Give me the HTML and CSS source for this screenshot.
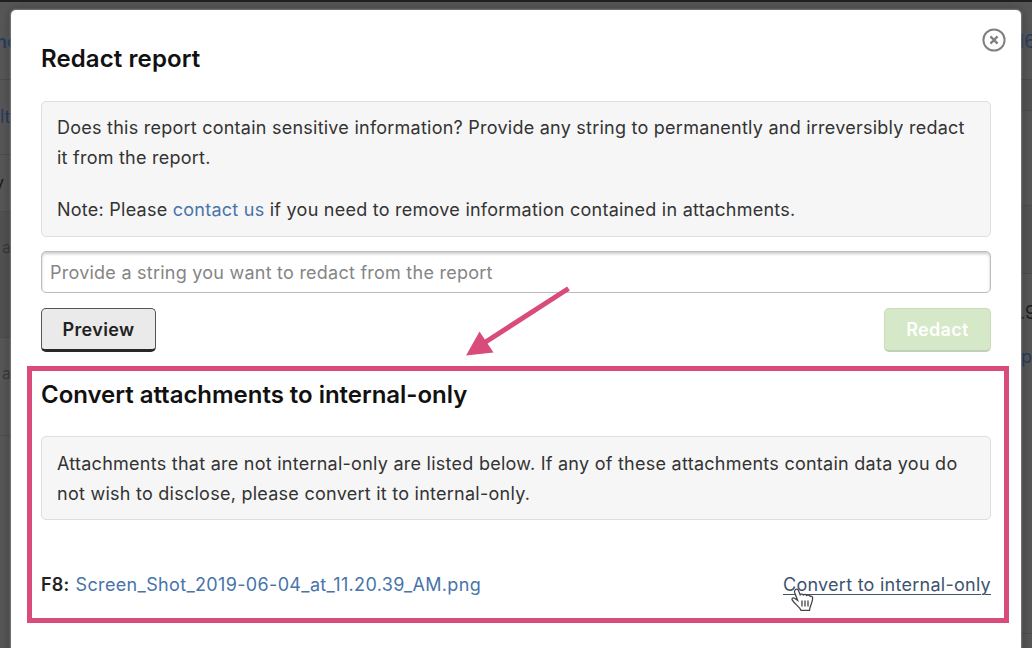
FILE: index.html
```html
<!DOCTYPE html>
<html lang="en">
<head>
<meta charset="utf-8">
<title>Redact report</title>
<link rel="stylesheet" href="styles.css">
</head>
<body>
<div class="page">
  <div class="backdrop">
    <div class="strip strip-left">
      <div class="cell l1"><span class="blue bold">no</span></div>
      <div class="cell l2"><span class="blue">lt</span></div>
      <div class="cell l3"><span class="dark">y</span></div>
      <div class="cell l4"><span>a</span></div>
      <div class="cell l5"><span>a</span></div>
    </div>
    <div class="strip strip-right">
      <div class="cell r1"><span class="blue">16</span></div>
      <div class="cell r2"></div>
      <div class="cell r3"></div>
      <div class="cell r4"></div>
      <div class="cell r5"><span class="dark">.9</span><span class="blue">p</span></div>
    </div>
  </div>
  <main class="modal">
    <svg class="close" viewBox="0 0 24 24"><circle cx="12" cy="12" r="10.6"/><path d="M8.4 8.4l7.2 7.2M15.6 8.4l-7.2 7.2"/></svg>
    <h1 class="title">Redact report</h1>
    <section class="note note-first">
      <p>Does this report contain sensitive information? Provide any string to permanently and irreversibly redact<br>it from the report.</p>
      <p class="remark">Note: Please <a class="link">contact us</a> if you need to remove information contained in attachments.</p>
    </section>
    <input class="field" type="text" placeholder="Provide a string you want to redact from the report">
    <div class="actions">
      <button class="btn">Preview</button>
      <button class="btn btn-redact">Redact</button>
    </div>
    <section class="convert">
      <h2 class="title title-convert">Convert attachments to internal-only</h2>
      <div class="note">
        <p>Attachments that are not internal-only are listed below. If any of these attachments contain data you do<br>not wish to disclose, please convert it to internal-only.</p>
      </div>
      <div class="file">
        <span class="file-name"><b>F8:</b> <a class="link">Screen_Shot_2019-06-04_at_11.20.39_AM.png</a></span>
        <a class="convert-link">Convert to internal-only</a>
      </div>
    </section>
    <svg class="arrow" viewBox="0 0 110 76"><path d="M104.500 5.500L20 60" fill="none" stroke="#d84b7b" stroke-width="5"/><path d="M2 72.500L15.500 48.500L29.500 69.500Z" fill="#d84b7b"/></svg>
    <svg class="cursor" viewBox="0 0 24 25"><path d="M5.500 1.500C7 .7 8.200 1.500 8.800 3.200L10.200 6.800C11.200 5.700 12.600 5.800 13.300 7C14.500 6 15.900 6.200 16.500 7.500C17.900 6.600 19.300 7 20 8.300C21.800 7.600 22.700 8.700 22.600 10.500C22.500 15 20 17 19.500 22.300H11C9.500 18.500 5 16.500 2.300 12.200C1.300 10.300 2.800 9.300 4.500 10.200L7.600 12.300L4.700 4.800C4.200 3.400 4.500 2.200 5.500 1.500Z"/><path d="M12 12.500v6M15 12.500v6M18 12.500v6"/></svg>
  </main>
</div>
</body>
</html>
```
FILE: styles.css
```css
* { box-sizing: border-box; }
body { margin: 0; font-family: Inter, "Liberation Sans", sans-serif; color: #333; }
.page { position: relative; width: 1032px; height: 648px; overflow: hidden; }
.backdrop { display: flex; justify-content: space-between; height: 648px; background: #565656; border-top: 2px solid #202020; padding-top: 1px; }
.strip { width: 11px; overflow: hidden; font-size: 18px; line-height: 24px; color: #383838; }
.cell { border-bottom: 1px solid #4b4b4b; }
.cell span { display: block; white-space: nowrap; }
.cell .blue { color: #263c5c; }
.cell .dark { color: #1d1d1d; }
.bold { font-weight: 600; }
.l1 { height: 77px; padding-top: 27px; }
.l1 span { margin-left: -4px; }
.l2 { height: 75px; padding-top: 25px; }
.l3 { height: 57px; padding-top: 16px; }
.l3 span { margin-left: -6px; }
.l4 { height: 126px; padding-top: 23px; background: #505050; }
.l4 span, .l5 span { margin-left: 2px; font-size: 16px; }
.l5 { height: 98px; padding-top: 23px; }
.r1 { height: 77px; padding-top: 27px; }
.r1 span { margin-left: -4px; }
.r2 { height: 31px; background: #525252; }
.r3 { height: 95px; }
.r4 { height: 68px; background: #525252; }
.r5 { height: 360px; padding-top: 27px; }
.r5 .blue { padding-top: 20px; }
.r5 .dark { margin-left: -1px; }
.modal { position: absolute; left: 11px; top: 10px; width: 1010px; height: 650px; padding: 32px 30px 0; background: #fff; border-radius: 5px; box-shadow: 0 0 2px 1px #aaa8, 0 0 8px #0006; }
.title { margin: 0; font-size: 24px; line-height: 34px; font-weight: 600; color: #111; letter-spacing: .1px; white-space: nowrap; }
.title-convert { letter-spacing: -.03px; }
.note { border: 1px solid #dedede; border-radius: 5px; background: #f6f6f6; padding: 11px 15px; font-size: 18px; line-height: 30px; letter-spacing: .24px; white-space: nowrap; }
.note p { margin: 0; }
.note p + p { margin-top: 22px; }
.remark { letter-spacing: .25px; }
.note-first { height: 136px; margin-top: 25px; }
.link { color: #4774aa; }
.field { display: block; width: 950px; height: 42px; margin-top: 14px; padding: 1px 8px 0; border: 1px solid #bcbcbc; border-radius: 5px; box-shadow: inset 0 2px 3px #0003; font: 18px Inter, sans-serif; letter-spacing: .24px; }
.field::placeholder { color: #858585; }
.actions { display: flex; justify-content: space-between; margin-top: 15px; }
.btn { width: 115px; height: 44px; padding: 0; border: 1px solid #555; border-bottom: 3px solid #282828; border-radius: 5px; background: #eaeaea; color: #222; font: 600 18px Inter, sans-serif; letter-spacing: .35px; }
.btn-redact { width: 107px; padding-bottom: 1px; color: #fff; background: #d5e8c7; border-color: #c9dcbd; border-bottom: 2px solid #c0cfb5; }
.convert { width: 982px; height: 257px; margin: 14px 0 0 -14px; padding: 7px 12px 0 9px; border: 5px solid #d84b7b; }
.convert .note { width: 950px; height: 84px; margin-top: 24px; padding-top: 12px; letter-spacing: .255px; }
.file { display: flex; justify-content: space-between; width: 950px; margin-top: 50px; font-size: 18px; line-height: 30px; color: #222; letter-spacing: .26px; white-space: nowrap; }
.file b { font-weight: 600; }
.file .link { letter-spacing: .35px; margin-left: .6px; }
.convert-link { color: #3e536d; text-decoration: underline; text-underline-offset: 3px; text-decoration-thickness: 1px; }
.close { position: absolute; right: 15px; top: 18px; width: 24px; height: 24px; fill: none; stroke: #808080; stroke-width: 2; }
.close path { stroke-width: 2.300; }
.arrow { position: absolute; left: 453px; top: 273px; width: 110px; height: 76px; }
.cursor { position: absolute; left: 779px; top: 578px; width: 24px; height: 25px; fill: #fff; stroke: #444; stroke-width: 1.300; }
```
